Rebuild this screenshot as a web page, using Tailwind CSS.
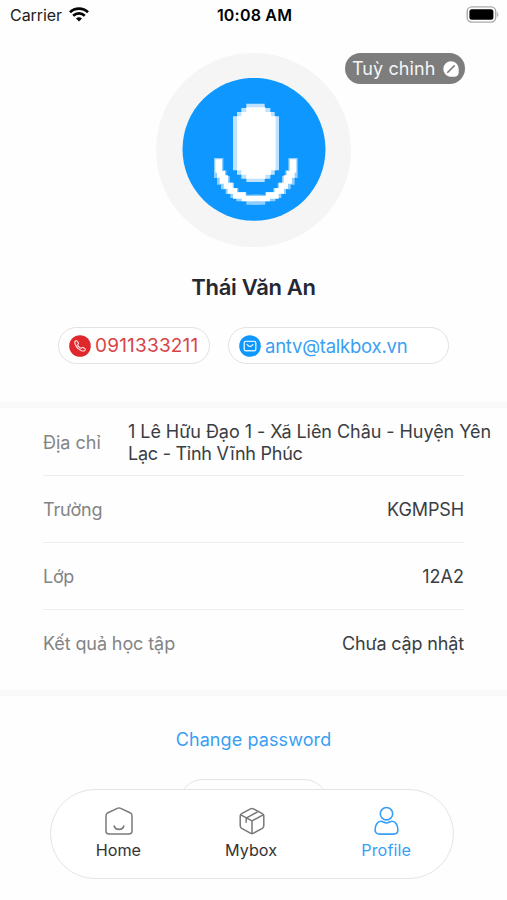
<!DOCTYPE html>
<html lang="vi">
<head>
<meta charset="utf-8">
<title>Profile</title>
<script src="https://cdn.jsdelivr.net/npm/@tailwindcss/browser@4"></script>
</head>
<body class="bg-white">
<div class="relative w-[507px] h-[900px] overflow-hidden bg-[#fefefe] font-['Inter','Noto_Sans',sans-serif] text-[18px] leading-[22px] text-[#3a3d43]">
  <header class="h-[30px] flex items-center justify-between pl-[10px] pr-[8px] text-[16px] text-[#222]">
    <div class="flex items-center gap-[7px] w-[90px]">
      <span class="tracking-[-0.05px]">Carrier</span>
      <svg class="w-[20px] h-[15px] -translate-y-px" viewBox="0 0 20 15" fill="none" stroke="#050505" stroke-width="2.7"><path d="M1 5.2C6 .5 14 .5 19 5.2M4.2 8.7c3.3-3.1 8.3-3.1 11.6 0"/><path d="M10 14.5l-3-3c1.8-1.600 4.200-1.600 6 0z" fill="#050505" stroke="none"/></svg>
    </div>
    <span class="font-semibold text-black tracking-[0.2px]">10:08 AM</span>
    <div class="w-[90px] flex justify-end">
      <svg class="w-[33px] h-[17px] -translate-y-px" viewBox="0 0 33 17"><rect x="1.200" y=".9" width="28.500" height="15.200" rx="4.500" fill="#fff" stroke="#aaa" stroke-width="1.400"/><rect x="3.400" y="3.200" width="24" height="10.600" rx="2.500"/><path d="M31.200 6v5c1.500-.6 1.500-4.400 0-5z" fill="#aaa"/></svg>
    </div>
  </header>

  <section class="relative h-[372px] flex flex-col items-center pt-[23px]">
    <div class="w-[195px] h-[194px] rounded-full bg-[#f5f5f5] flex items-center justify-center">
      <svg class="w-[144px] h-[144px]" viewBox="0 0 432 432">
        <circle cx="216" cy="214" r="214.500" fill="#0d97ff"/>
        <g transform="translate(-97 -98)">
          <path fill="#bfe3ff" d="M290 175h55v13h17v12h13v13h13v162h-13v13h-13v12h-17v10h-55v-10h-15v-12h-13v-13h-12V213h12v-13h13v-12h15z"/>
          <path fill="#fff" d="M290 186h57v14h17v13h14v162h-14v13h-17v12h-57v-12h-15v-13h-13V213h13v-13h15z"/>
          <g id="arc">
            <path fill="#8fceff" d="M193 338h28v37h9v17h10v20h13v16h13v12h24v8h40v30h-40v-10h-30v-10h-18v-12h-14v-14h-14v-14h-12v-20h-9z"/>
            <path fill="#fff" d="M197 342h20v35h9v13h9v22h14v16h13v13h26v11h43v16h-55v-8h-26v-15h-16v-15h-12v-15h-12v-18h-8v-15h-5z"/>
          </g>
          <use href="#arc" transform="translate(637 0) scale(-1 1)"/>
        </g>
      </svg>
    </div>
    <button class="absolute left-[345px] top-[23px] w-[120px] h-[31px] rounded-full bg-[#7d7d7d] text-[#f5f5f5] flex items-center pl-[7px] gap-[8px] whitespace-nowrap">
      <span class="tracking-[0.080px]">Tuỳ chỉnh</span>
      <svg class="w-[16px] h-[16px] shrink-0" viewBox="0 0 16 16"><path d="M8 .3a7.700 7.700 0 0 1 7.700 7.700v3.500a4.200 4.200 0 0 1-4.200 4.200H8A7.700 7.700 0 0 1 8 .3z" fill="#fff"/><path d="M4.800 11.300l6.500-6.500" stroke="#777" stroke-width="1.600" stroke-linecap="round"/></svg>
    </button>
    <h1 class="mt-[26px] text-[22px] leading-[28px] font-semibold text-[#252832] tracking-[-0.3px] whitespace-nowrap">Thái Văn An</h1>
    <div class="mt-[26px] w-full flex pl-[58px] gap-[18px] text-[19px]">
      <div class="w-[152px] h-[37px] rounded-full border-[1.5px] border-[#e2e2e2] bg-white flex items-center pl-[10px] gap-[4px] text-[#da4345]">
        <svg class="w-[22px] h-[22px] shrink-0" viewBox="0 0 22 22"><circle cx="11" cy="11" r="10.800" fill="#df282b"/><path d="M6.800 5.700c-1.200.8-1.200 2.200-.5 3.800 1.200 2.800 3.400 5 6.200 6.200 1.700.7 3 .5 3.800-.7.3-.5.1-.9-.3-1.200l-1.900-1.300c-.5-.3-.9-.2-1.300.3-.5.7-.8.6-1.500.2-1-.6-1.800-1.400-2.400-2.400-.4-.7-.5-1 .2-1.500.5-.4.6-.8.3-1.300L8.100 6c-.3-.5-.8-.6-1.300-.3z" fill="none" stroke="#fbd5d6" stroke-width="1.200"/></svg>
        <span class="tracking-[0.200px]">0911333211</span>
      </div>
      <div class="w-[221px] h-[37px] rounded-full border-[1.5px] border-[#e2e2e2] bg-white flex items-center pl-[10px] gap-[4px] text-[#399ff3]">
        <svg class="w-[22px] h-[22px] shrink-0" viewBox="0 0 22 22"><circle cx="11" cy="11" r="10.800" fill="#0d97ff"/><rect x="5.200" y="6.400" width="11.600" height="9.400" rx="1.600" fill="none" stroke="#d9efff" stroke-width="1.400"/><path d="M7.700 9.200l2 1.700c.8.7 1.800.7 2.600 0l2-1.700" fill="none" stroke="#d9efff" stroke-width="1.300"/></svg>
        <span class="text-[18.5px] tracking-[-0.240px]">antv@talkbox.vn</span>
      </div>
    </div>
  </section>

  <section class="border-y-[6px] border-[#f9f9f9] h-[294px]">
    <div class="ml-[43px] w-[421px] h-[68px] pt-[2px] border-b-[1.5px] border-[#ededed] flex items-center text-[#848484]">
      <span class="w-[85px] shrink-0">Địa chỉ</span>
      <p class="w-[370px] shrink-0 text-[#3a3d43] tracking-[-0.050px] whitespace-nowrap">1 Lê Hữu Đạo 1 - Xã Liên Châu - Huyện Yên<br><span class="tracking-[-0.250px]">Lạc - Tỉnh Vĩnh Phúc</span></p>
    </div>
    <div class="ml-[43px] w-[421px] h-[67px] pt-[2px] border-b-[1.5px] border-[#ededed] flex items-center justify-between text-[#848484]"><span class="tracking-[-0.150px]">Trường</span><span class="text-[#3a3d43] tracking-[-0.100px]">KGMPSH</span></div>
    <div class="ml-[43px] w-[421px] h-[67px] pt-[2px] border-b-[1.5px] border-[#ededed] flex items-center justify-between text-[#848484]"><span class="tracking-[-0.300px]">Lớp</span><span class="text-[#3a3d43]">12A2</span></div>
    <div class="ml-[43px] w-[421px] h-[67px] flex items-center justify-between text-[#848484]"><span class="tracking-[-0.100px]">Kết quả học tập</span><span class="text-[#3a3d43] tracking-[-0.150px]">Chưa cập nhật</span></div>
  </section>

  <section class="flex flex-col items-center pt-[33px]">
    <a class="text-[#399ff3] tracking-[0.100px]">Change password</a>
    <div class="mt-[28px] w-[151px] h-[50px] rounded-full border-[1.5px] border-[#e5e5e5]"></div>
  </section>

  <nav class="absolute left-[50px] top-[789px] w-[404px] h-[90px] rounded-full border-[1.5px] border-[#e4e4e4] bg-white flex pl-[1px] text-[16.2px] leading-[20px] text-[#333]">
    <div class="w-[133px] flex flex-col items-center pt-[16px] gap-[4px]">
      <svg class="w-[30px] h-[30px] translate-x-px" viewBox="0 0 30 30" fill="none" stroke="#7b7b7b" stroke-width="1.500"><path d="M13.800 2.200a2.600 2.600 0 0 1 2.400 0l9.800 4.500c1.400.7 2 1.600 2 3.100V25c0 1.900-1.100 3-3 3H5c-1.900 0-3-1.100-3-3V9.800c0-1.500.6-2.400 2-3.100z"/><path d="M10 19.500c1.500 5.200 8.500 5.200 10 0" stroke-width="1.700"/></svg>
      <span>Home</span>
    </div>
    <div class="w-[133px] flex flex-col items-center pt-[16px] gap-[4px]">
      <svg class="w-[30px] h-[30px] translate-x-px" viewBox="0 0 30 30" fill="none" stroke="#777" stroke-width="1.500" stroke-linejoin="round"><path d="M13.500 2.900a3 3 0 0 1 3 0l8.900 4.700a2.500 2.500 0 0 1 1.400 2.300v9.900c0 1.200-.5 2-1.500 2.600l-8.700 4.700a3.300 3.300 0 0 1-3.200 0l-8.700-4.700c-1-.6-1.500-1.400-1.500-2.600V9.900c0-1 .5-1.800 1.400-2.300z"/><path d="M3.800 8.800L15 14.900l11.200-6.100M15 14.900v12.400M9.200 16.800v-4.600L20.600 5.800"/></svg>
      <span>Mybox</span>
    </div>
    <div class="w-[136px] flex flex-col items-center pt-[16px] gap-[4px] text-[#399ff3]">
      <svg class="w-[30px] h-[30px] translate-x-[1.5px]" viewBox="0 0 30 30" fill="none" stroke="#389ff7" stroke-width="1.600"><circle cx="15" cy="7.700" r="6.200"/><path d="M9.500 15.300c2 0 3 1.700 5.500 1.700s3.500-1.700 5.500-1.700c3.800 0 5.900 4.300 5.900 8.400 0 3-1.800 4.400-4.200 4.400H7.800c-2.400 0-4.200-1.400-4.200-4.400 0-4.100 2.100-8.400 5.900-8.400z"/></svg>
      <span class="translate-x-[1px] tracking-[0.100px]">Profile</span>
    </div>
  </nav>
</div>
</body>
</html>
